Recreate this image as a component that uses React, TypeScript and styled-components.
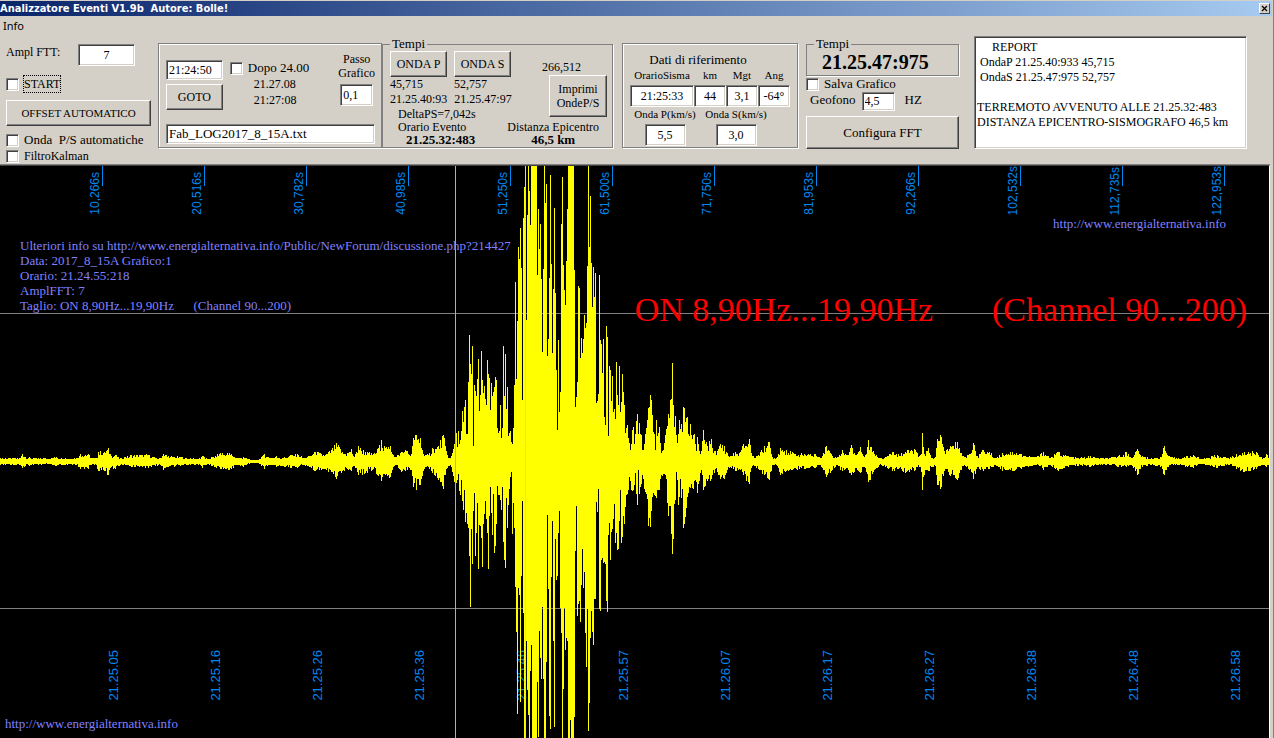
import React from "react";
import styled, { createGlobalStyle, css } from "styled-components";

const face = "#d4d0c8";
const shade = "#808080";
const dark = "#404040";
const serif = '"Liberation Serif", "Times New Roman", serif';

const GlobalStyle = createGlobalStyle`
  *, *::before, *::after { box-sizing: border-box; }
  body { margin: 0; background: ${face}; overflow: hidden; }
`;

const sunken = css`
  border: 1px solid;
  border-color: ${shade} #fff #fff ${shade};
  box-shadow: inset 1px 1px ${dark}, inset -1px -1px ${face};
`;

const Window = styled.div`
  display: flex;
  flex-direction: column;
  min-height: 100vh;
  background: ${face};
  border-right: 1px solid ${shade};
  color: #000;
  font: 12px/16px ${serif};
`;

const TitleBar = styled.header`
  display: flex;
  align-items: center;
  justify-content: space-between;
  height: 15px;
  margin: 1px 1px 0 0;
  padding-right: 2px;
  background: linear-gradient(to right, #0a246a, #a6caf0);
`;

const Title = styled.h1`
  margin: 0;
  color: #fff;
  white-space: pre;
  font: bold 11px/15px "DejaVu Sans Condensed", Tahoma, sans-serif;
`;

const CloseButton = styled.button`
  display: grid;
  place-items: center;
  width: 11px;
  height: 11px;
  padding: 0;
  background: ${face};
  border: 1px solid;
  border-color: #fff ${dark} ${dark} #fff;
`;

const MenuBar = styled.nav`
  display: flex;
  height: 20px;
  padding-left: 3px;
`;

const MenuItem = styled.button`
  padding: 0;
  border: 0;
  background: none;
  color: #000;
  font: 11px/20px "Noto Sans", Tahoma, sans-serif;
`;

const Toolbar = styled.section`
  display: flex;
  align-items: flex-start;
  height: 128px;
  padding: 0 26px 0 6px;
  white-space: nowrap;
`;

const Button = styled.button<{ $w?: number; $h?: number; $size?: number }>`
  width: ${(p) => (p.$w ? `${p.$w}px` : "100%")};
  height: ${(p) => p.$h ?? 26}px;
  padding: 0;
  background: ${face};
  color: #000;
  border: 1px solid;
  border-color: #fff ${dark} ${dark} #fff;
  box-shadow: inset -1px -1px ${shade};
  font: ${(p) => p.$size ?? 12}px/14px ${serif};
`;

const Field = styled.input<{ $w?: number; $h?: number; $center?: boolean; $size?: number }>`
  ${sunken}
  width: ${(p) => (p.$w ? `${p.$w}px` : "100%")};
  height: ${(p) => p.$h ?? 22}px;
  padding: 0 2px;
  background: #fff;
  color: #000;
  border-radius: 0;
  text-align: ${(p) => (p.$center ? "center" : "left")};
  font: ${(p) => p.$size ?? 12}px/16px ${serif};
`;

const CheckLabel = styled.label<{ $size?: number; $gap?: number }>`
  display: flex;
  align-items: center;
  gap: ${(p) => p.$gap ?? 5}px;
  height: 16px;
  white-space: pre;
  font-size: ${(p) => p.$size ?? 12}px;
`;

const CheckBox = styled.input`
  ${sunken}
  appearance: none;
  width: 13px;
  height: 13px;
  margin: 0;
  background: #fff;
`;

const Focused = styled.span`
  outline: 1px dotted #000;
  line-height: 16px;
`;

const Settings = styled.div`
  width: 152px;
  padding-top: 8px;
`;

const AmplRow = styled.label`
  display: flex;
  justify-content: space-between;
  width: 129px;
  margin-bottom: 10px;
`;

const OffsetRow = styled.div`
  width: 145px;
  padding: 8px 0 6px;
`;

const etched = css`
  border: 1px solid ${shade};
  box-shadow: 1px 1px #fff, inset 1px 1px #fff;
`;

const Panel = styled.div<{ $w: number; $gap?: number }>`
  ${etched}
  width: ${(p) => p.$w}px;
  height: 105px;
  margin: 7px ${(p) => p.$gap ?? 0}px 0 0;
  padding: 1px 6px 0 7px;
`;

const Group = styled.fieldset<{ $w?: number; $gap?: number }>`
  min-width: 0;
  width: ${(p) => (p.$w ? `${p.$w}px` : "100%")};
  margin: 1px ${(p) => p.$gap ?? 0}px 0 0;
  padding: 0 5px 0 7px;
  border: 1px solid ${shade};
  box-shadow: 1px 1px #fff;
`;

const Legend = styled.legend`
  padding: 0 2px;
  background: ${face};
  font-size: 13px;
  line-height: 14px;
`;

const Row = styled.div<{ $gap?: number }>`
  display: flex;
  gap: ${(p) => p.$gap ?? 0}px;
`;

const GotoRow = styled(Row)`
  height: 79px;
`;

const GotoColumn = styled.div`
  display: flex;
  flex-direction: column;
  gap: 4px;
  width: 57px;
  padding-top: 15px;
`;

const AfterColumn = styled.div`
  width: 102px;
  padding-top: 15px;
`;

const AfterTime = styled.div`
  padding-left: 24px;
`;

const StepLabel = styled.label`
  display: flex;
  flex-direction: column;
  align-items: center;
  flex: 1;
  padding-top: 7px;
  text-align: center;
  line-height: 14px;
  input { margin-top: 4px; }
`;

const WaveTimes = styled.div`
  width: 121px;
`;

const WaveColumn = styled.div<{ $lh: number }>`
  flex: 1;
  line-height: ${(p) => p.$lh}px;
`;

const Delta = styled.div`
  padding-left: 8px;
  line-height: 14px;
`;

const PrintColumn = styled.div`
  display: flex;
  flex-direction: column;
  width: 65px;
  margin-left: auto;
  padding-top: 9px;
  line-height: 15px;
  button { align-self: flex-end; }
`;

const Results = styled.div`
  display: flex;
  gap: 40px;
  padding-left: 8px;
`;

const Result = styled.div<{ $center?: boolean }>`
  line-height: 12px;
  text-align: ${(p) => (p.$center ? "center" : "left")};
  strong {
    display: block;
    padding-left: ${(p) => (p.$center ? 0 : 8)}px;
    font-size: 13px;
    line-height: 14px;
  }
`;

const ResultsTight = styled(Results)`
  gap: 32px;
`;

const RefTitle = styled.div`
  padding: 7px 25px 0 0;
  text-align: center;
  font-size: 13px;
  line-height: 16px;
`;

const RefField = styled.label<{ $w: number }>`
  display: flex;
  flex-direction: column;
  align-items: center;
  gap: 2px;
  width: ${(p) => p.$w}px;
  font-size: 11px;
  line-height: 15px;
`;

const Analysis = styled.div`
  width: 153px;
  margin-right: 15px;
`;

const ClockTime = styled.strong`
  display: block;
  padding: 0 0 1px 8px;
  font-size: 20px;
  line-height: 23px;
`;

const GeoRow = styled.label`
  display: flex;
  align-items: flex-start;
  gap: 6px;
  margin-bottom: 5px;
  padding-left: 4px;
  font-size: 13px;
  span:last-child { padding-left: 4px; }
`;

const Report = styled.textarea`
  ${sunken}
  flex: 1;
  min-width: 0;
  height: 113px;
  padding: 3px 2px;
  resize: none;
  overflow: hidden;
  background: #fff;
  color: #000;
  font: 12px/15px ${serif};
`;

const Chart = styled.main`
  position: relative;
  flex: 1;
  min-height: 572px;
  margin-right: 3px;
  overflow: hidden;
  background: #000;
  border-top: 1px solid ${dark};
  border-right: 1px solid #fff;
  box-shadow: 0 -1px ${shade};
  margin-top: 1px;
  color: #8080ff;
  font: 13px/15px ${serif};
`;

const Plot = styled.svg`
  position: absolute;
  inset: 0;
  width: 100%;
  height: 100%;
`;

const Axis = styled.div<{ $bottom?: boolean }>`
  position: absolute;
  left: 0;
  right: 0;
  ${(p) => (p.$bottom ? "bottom: 37px;" : "top: 0;")}
  display: grid;
  grid-template-columns: repeat(12, 102fr) 45fr;
  color: #0088f0;
  font: ${(p) => (p.$bottom ? 13 : 12)}px/14px "Liberation Sans", Arial, sans-serif;
`;

const Vertical = styled.span`
  writing-mode: vertical-rl;
  transform: rotate(180deg);
`;

const TopMark = styled.div`
  display: flex;
  align-items: flex-end;
  justify-content: flex-end;
  height: 49px;
  margin-right: -1px;
  &::after {
    content: "";
    align-self: flex-start;
    flex: none;
    width: 1px;
    height: 20px;
    background: #0088f0;
  }
`;

const BottomMark = styled.div`
  display: flex;
  padding-left: 5px;
  &:first-of-type { grid-column-start: 2; }
`;

const Info = styled.div`
  position: absolute;
  top: 72px;
  left: 20px;
  white-space: pre;
`;

const SiteLink = styled.a<{ $corner: "top" | "bottom" }>`
  position: absolute;
  ${(p) => (p.$corner === "top" ? "top: 50px; right: 43px;" : "bottom: 7px; left: 5px;")}
  color: inherit;
  text-decoration: none;
`;

const Banner = styled.div`
  position: absolute;
  top: 124px;
  right: 22px;
  display: flex;
  gap: 59px;
  color: #f00;
  font-size: 34px;
  line-height: 40px;
  white-space: nowrap;
`;

const WIDTH = 1269;
const HEIGHT = 572;
const ZERO = 295;

/* Quiet parts of the trace: x, peak above and peak below zero, in thirds of a pixel. */
type Key = [number, number, number];
const before: Key[] = [
  [0, 9, 8], [14, 9, 9], [20, 9, 9], [22, 21, 19], [25, 12, 11], [33, 9, 9], [45, 8, 7], [56, 12, 11], [65, 8, 8],
  [76, 9, 8], [80, 20, 20], [88, 22, 20], [91, 8, 8], [96, 8, 10], [98, 28, 28], [104, 28, 28], [108, 38, 39],
  [111, 14, 14], [115, 18, 22], [120, 8, 9], [125, 12, 10], [131, 18, 14], [139, 18, 16], [148, 19, 18],
  [155, 10, 12], [160, 10, 10], [163, 22, 24], [168, 14, 14], [180, 12, 11], [190, 8, 8], [198, 7, 8],
  [202, 16, 17], [207, 7, 7], [215, 16, 16], [220, 24, 20], [231, 22, 22], [236, 9, 8], [243, 12, 14],
  [250, 4, 4], [258, 4, 4], [264, 20, 20], [270, 10, 10], [276, 14, 14], [282, 9, 12], [290, 18, 18],
  [297, 20, 17], [303, 10, 10], [309, 16, 14], [315, 28, 28], [325, 18, 22], [331, 34, 30], [336, 54, 52],
  [342, 28, 26], [347, 24, 20], [351, 36, 28], [354, 12, 12], [358, 44, 38], [365, 28, 34], [373, 20, 22],
  [378, 38, 42], [381, 62, 56], [385, 38, 38], [390, 45, 45], [395, 12, 10], [401, 28, 30], [405, 32, 26],
  [411, 20, 24], [413, 68, 75], [416, 78, 84], [420, 68, 70], [423, 20, 26], [428, 18, 16], [432, 38, 34],
  [437, 42, 48], [440, 62, 60], [443, 78, 80], [446, 30, 20], [449, 8, 12], [451, 14, 16], [454, 50, 60], [456, 70, 70],
];
const after: Key[] = [
  [717, 30, 30], [720, 52, 50], [724, 45, 52], [728, 16, 16], [735, 26, 26], [739, 24, 20],
  [743, 50, 40], [749, 66, 66], [752, 14, 12], [758, 18, 22], [764, 44, 38], [769, 56, 54], [772, 12, 10],
  [776, 8, 8], [780, 40, 38], [786, 32, 26], [793, 24, 22], [804, 20, 20], [815, 20, 18], [820, 10, 8],
  [826, 46, 46], [831, 22, 28], [836, 8, 10], [842, 32, 28], [846, 18, 18], [851, 48, 40], [856, 18, 18],
  [860, 42, 32], [864, 12, 14], [868, 64, 60], [874, 22, 24], [881, 8, 8], [892, 28, 28], [898, 20, 20],
  [905, 28, 32], [914, 36, 28], [919, 16, 14], [921, 20, 30], [922, 84, 84], [924, 22, 40], [928, 38, 28],
  [931, 10, 16], [935, 12, 12], [937, 66, 70], [941, 72, 74], [944, 30, 28], [950, 44, 42], [957, 58, 54],
  [963, 14, 12], [968, 18, 20], [973, 54, 50], [977, 14, 14], [983, 34, 28], [989, 28, 22], [995, 10, 10],
  [1002, 24, 26], [1012, 28, 26], [1021, 22, 20], [1030, 12, 12], [1038, 14, 10], [1043, 28, 24], [1050, 10, 10],
  [1058, 28, 26], [1068, 14, 14], [1080, 10, 10], [1090, 14, 14], [1098, 8, 8], [1109, 9, 9], [1118, 16, 14],
  [1126, 26, 14], [1131, 10, 10], [1137, 36, 38], [1142, 14, 14], [1151, 8, 8], [1160, 12, 14], [1164, 44, 40],
  [1168, 14, 14], [1178, 8, 8], [1193, 18, 18], [1201, 6, 6], [1217, 18, 18], [1228, 8, 8], [1236, 20, 20],
  [1244, 26, 30], [1256, 28, 22], [1263, 8, 8], [1266, 20, 14], [1269, 12, 12],
];

/* The event itself: one sample a column from x = 456, in thirds of a pixel.
   Crests are measured from 6 above the plot, troughs from 274 below its top. */
const crest = [
  820, 860, 813, 852, 840, 813, 753, 787, 742, 720, 822, 822, 666, 525, 612, 642, 558, 858, 675, 693, 708, 657, 597,
  753, 705, 573, 660, 699, 678, 717, 735, 600, 642, 654, 750, 669, 708, 696, 682, 651, 660, 804, 819, 813, 735, 834,
  804, 558, 708, 582, 747, 681, 828, 819, 813, 846, 852, 804, 675, 366, 657, 483, 261, 297, 204, 324, 720, 174, 81,
  18, 480, 165, 18, 93, 195, 18, 18, 18, 18, 18, 18, 345, 147, 267, 192, 357, 576, 327, 18, 129, 72, 588, 537, 354,
  45, 312, 579, 387, 144, 399, 630, 810, 540, 756, 696, 192, 51, 315, 390, 435, 303, 147, 18, 18, 18, 18, 18, 18,
  330, 741, 711, 666, 378, 384, 594, 534, 579, 537, 465, 504, 489, 318, 18, 261, 108, 309, 441, 321, 411, 339, 729,
  723, 702, 345, 540, 552, 639, 537, 771, 795, 498, 531, 828, 618, 630, 723, 648, 756, 747, 777, 606, 705, 735, 618,
  756, 726, 642, 696, 735, 819, 804, 795, 834, 849, 870, 852, 810, 801, 852, 822, 783, 762, 822, 789, 822, 825, 870,
  870, 852, 822, 804, 780, 744, 741, 705, 720, 765, 816, 822, 870, 780, 828, 819, 801, 849, 879, 873, 870, 849, 825,
  807, 798, 762, 774, 720, 717, 609, 735, 801, 768, 825, 849, 822, 780, 807, 792, 816, 741, 744, 786, 774, 771, 822,
  828, 792, 825, 837, 825, 822, 852, 873, 831, 852, 873, 882, 873, 843, 810, 840, 852, 846, 858, 873, 843, 852, 837,
];
const trough = [
  128, 120, 102, 152, 165, 120, 183, 210, 150, 246, 219, 252, 264, 348, 501, 267, 372, 213, 159, 348, 279, 189, 387,
  255, 258, 294, 381, 252, 222, 183, 237, 279, 387, 228, 141, 219, 285, 162, 339, 318, 252, 138, 165, 165, 180, 210,
  141, 306, 360, 384, 174, 264, 195, 147, 111, 96, 282, 189, 264, 441, 576, 822, 444, 465, 786, 408, 183, 519, 900,
  900, 603, 750, 825, 900, 693, 615, 900, 900, 900, 900, 900, 726, 890, 573, 654, 717, 501, 717, 900, 900, 666, 225,
  447, 828, 867, 411, 243, 603, 861, 297, 420, 408, 279, 213, 504, 579, 900, 747, 504, 630, 594, 603, 900, 900, 840,
  900, 900, 900, 831, 333, 198, 528, 492, 483, 546, 435, 327, 444, 396, 579, 681, 507, 873, 789, 594, 513, 576, 615,
  477, 477, 186, 216, 147, 507, 513, 360, 354, 369, 366, 372, 483, 516, 285, 249, 360, 276, 267, 237, 192, 309, 280,
  330, 327, 243, 150, 309, 291, 228, 252, 201, 165, 162, 150, 111, 123, 150, 153, 150, 135, 99, 162, 195, 90, 162,
  141, 132, 105, 117, 147, 156, 162, 177, 258, 234, 261, 213, 171, 159, 165, 168, 174, 150, 150, 150, 117, 105, 108,
  102, 102, 105, 117, 189, 228, 198, 198, 282, 342, 297, 192, 180, 96, 120, 195, 171, 117, 174, 147, 264, 252, 231,
  204, 171, 159, 141, 144, 132, 144, 147, 123, 120, 126, 160, 132, 123, 99, 90, 105, 150, 141, 138, 117, 123, 117,
  105, 123, 117, 126, 126,
];

const noise = (n: number) => {
  const v = Math.sin(n * 12.9898) * 43758.5453;
  return v - Math.floor(v);
};

const column = (x: number, top: number, bottom: number) =>
  `M${x} ${Math.round(top)}h1V${Math.round(bottom)}h-1z`;

const quiet = (keys: Key[]) => {
  const parts: string[] = [];
  for (let k = 0; k < keys.length - 1; k++) {
    const [x0, u0, d0] = keys[k];
    const [x1, u1, d1] = keys[k + 1];
    for (let x = x0; x < x1; x++) {
      const t = (x - x0) / (x1 - x0);
      const jitterUp = x === x0 ? 1 : 0.55 + 0.55 * noise(x + 1);
      const jitterDown = x === x0 ? 1 : 0.55 + 0.55 * noise(x + 5000);
      const up = ((u0 + (u1 - u0) * t) * jitterUp) / 3;
      const down = ((d0 + (d1 - d0) * t) * jitterDown) / 3;
      parts.push(column(x, ZERO - Math.max(1, up), ZERO + 1 + Math.max(1, down)));
    }
  }
  return parts.join("");
};

const event = crest
  .map((c, i) => column(456 + i, Math.max(0, c / 3 - 6), 274 + (trough[i] ?? 100) / 3))
  .join("");

const tail: Key[] = [
  [456 + crest.length, 40, 40],
  ...after.filter(([x]) => x > 456 + crest.length),
];

const trace = quiet(before) + event + quiet(tail);

const seconds = [
  "10,266s", "20,516s", "30,782s", "40,985s", "51,250s", "61,500s",
  "71,750s", "81,953s", "92,266s", "102,532s", "112,735s", "122,953s",
];
const clock = [
  "21.25.05", "21.25.16", "21.25.26", "21.25.36", "21.25.46", "21.25.57",
  "21.26.07", "21.26.17", "21.26.27", "21.26.38", "21.26.48", "21.26.58",
];

const site = "http://www.energialternativa.info";

const report = `     REPORT
 OndaP 21.25.40:933 45,715
 OndaS 21.25.47:975 52,757

TERREMOTO AVVENUTO ALLE 21.25.32:483
DISTANZA EPICENTRO-SISMOGRAFO 46,5 km`;

const info = `Ulteriori info su http://www.energialternativa.info/Public/NewForum/discussione.php?214427
Data: 2017_8_15A Grafico:1
Orario: 21.24.55:218
AmplFFT: 7
Taglio: ON 8,90Hz...19,90Hz      (Channel 90...200)`;

export default function App() {
  return (
    <Window>
      <GlobalStyle />
      <TitleBar>
        <Title>{"Analizzatore Eventi V1.9b  Autore: Bolle!"}</Title>
        <CloseButton aria-label="Chiudi">
          <svg width="7" height="7" viewBox="0 0 7 7" stroke="#000" strokeWidth="1.2">
            <path d="M1 1l5 5M6 1l-5 5" />
          </svg>
        </CloseButton>
      </TitleBar>
      <MenuBar>
        <MenuItem>Info</MenuItem>
      </MenuBar>

      <Toolbar>
        <Settings>
          <AmplRow>
            Ampl FTT:
            <Field $w={57} $center defaultValue="7" />
          </AmplRow>
          <CheckLabel>
            <CheckBox type="checkbox" />
            <Focused>START</Focused>
          </CheckLabel>
          <OffsetRow>
            <Button $size={11}>OFFSET AUTOMATICO</Button>
          </OffsetRow>
          <CheckLabel $size={13}>
            <CheckBox type="checkbox" />
            {"Onda  P/S automatiche"}
          </CheckLabel>
          <CheckLabel $size={12}>
            <CheckBox type="checkbox" />
            FiltroKalman
          </CheckLabel>
        </Settings>

        <Panel $w={224}>
          <GotoRow $gap={7}>
            <GotoColumn>
              <Field $h={20} defaultValue="21:24:50" aria-label="Orario" />
              <Button $h={26}>GOTO</Button>
            </GotoColumn>
            <AfterColumn>
              <CheckLabel $size={13}>
                <CheckBox type="checkbox" />
                Dopo 24.00
              </CheckLabel>
              <AfterTime>21.27.08</AfterTime>
              <AfterTime>21:27:08</AfterTime>
            </AfterColumn>
            <StepLabel>
              <span>Passo</span>
              <span>Grafico</span>
              <Field $w={33} defaultValue="0,1" />
            </StepLabel>
          </GotoRow>
          <Field $h={20} $size={13} defaultValue="Fab_LOG2017_8_15A.txt" aria-label="File" />
        </Panel>

        <Group $w={231} $gap={9}>
          <Legend>Tempi</Legend>
          <Row>
            <WaveTimes>
              <Row $gap={7}>
                <Button $w={57}>ONDA P</Button>
                <Button $w={57}>ONDA S</Button>
              </Row>
              <Row $gap={7}>
                <WaveColumn $lh={14}>45,715</WaveColumn>
                <WaveColumn $lh={14}>52,757</WaveColumn>
              </Row>
              <Row $gap={7}>
                <WaveColumn $lh={16}>21.25.40:93</WaveColumn>
                <WaveColumn $lh={16}>21.25.47:97</WaveColumn>
              </Row>
              <Delta>DeltaPS=7,042s</Delta>
            </WaveTimes>
            <PrintColumn>
              266,512
              <Button $w={58} $h={42}>
                Imprimi
                <br />
                OndeP/S
              </Button>
            </PrintColumn>
          </Row>
          <ResultsTight>
            <Result>
              Orario Evento
              <strong>21.25.32:483</strong>
            </Result>
            <Result $center>
              Distanza Epicentro
              <strong>46,5 km</strong>
            </Result>
          </ResultsTight>
        </Group>

        <Panel $w={176} $gap={8}>
          <RefTitle>Dati di riferimento</RefTitle>
          <Row>
            <RefField $w={64}>
              OrarioSisma
              <Field $center defaultValue="21:25:33" />
            </RefField>
            <RefField $w={32}>
              km
              <Field $center defaultValue="44" />
            </RefField>
            <RefField $w={32}>
              Mgt
              <Field $center defaultValue="3,1" />
            </RefField>
            <RefField $w={32}>
              Ang
              <Field $center defaultValue="-64°" />
            </RefField>
          </Row>
          <Row>
            <RefField $w={70}>
              Onda P(km/s)
              <Field $w={41} $center defaultValue="5,5" />
            </RefField>
            <RefField $w={72}>
              Onda S(km/s)
              <Field $w={41} $center defaultValue="3,0" />
            </RefField>
          </Row>
        </Panel>

        <Analysis>
          <Group>
            <Legend>Tempi</Legend>
            <ClockTime>21.25.47:975</ClockTime>
          </Group>
          <CheckLabel $size={13}>
            <CheckBox type="checkbox" />
            Salva Grafico
          </CheckLabel>
          <GeoRow>
            <span>Geofono</span>
            <Field $w={33} $h={19} defaultValue="4,5" />
            <span>HZ</span>
          </GeoRow>
          <Button $h={33} $size={13}>
            Configura FFT
          </Button>
        </Analysis>

        <Report aria-label="Report" defaultValue={report} spellCheck={false} />
      </Toolbar>

      <Chart>
        <Axis $bottom>
          {clock.map((t) => (
            <BottomMark key={t}>
              <Vertical>{t}</Vertical>
            </BottomMark>
          ))}
        </Axis>
        <Plot viewBox={`0 0 ${WIDTH} ${HEIGHT}`} preserveAspectRatio="none" shapeRendering="crispEdges">
          <path d={`M0 147h${WIDTH}v1H0zM0 442h${WIDTH}v1H0z`} fill="#808080" />
          <path d={trace} fill="#ff0" />
          <path d={`M455 0h1v${HEIGHT}h-1z`} fill="#ee82ee" />
          <path d={`M525 0h1v${HEIGHT}h-1z`} fill="#7fffd4" />
        </Plot>
        <Axis>
          {seconds.map((s) => (
            <TopMark key={s}>
              <Vertical>{s}</Vertical>
            </TopMark>
          ))}
        </Axis>
        <SiteLink $corner="top" href={site}>
          {site}
        </SiteLink>
        <Info>{info}</Info>
        <Banner>
          <span>ON 8,90Hz...19,90Hz</span>
          <span>(Channel 90...200)</span>
        </Banner>
        <SiteLink $corner="bottom" href={site}>
          {site}
        </SiteLink>
      </Chart>
    </Window>
  );
}
